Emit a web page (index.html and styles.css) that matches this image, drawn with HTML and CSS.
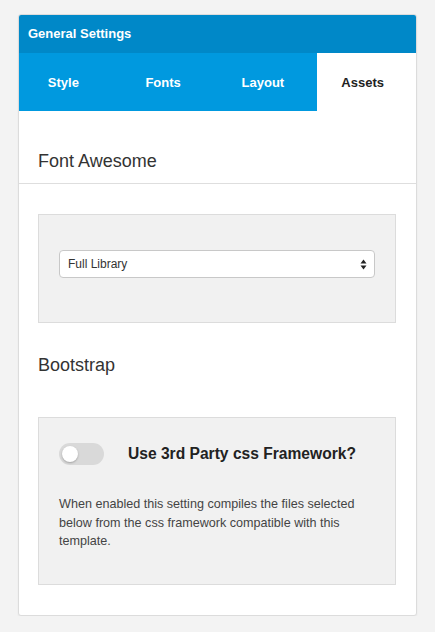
FILE: index.html
```html
<!DOCTYPE html>
<html>
<head>
<meta charset="utf-8">
<link rel="stylesheet" href="styles.css">
</head>
<body>
<div class="card">
  <div class="card-header">General Settings</div>
  <div class="tabs">
    <div class="tab">Style</div>
    <div class="tab">Fonts</div>
    <div class="tab">Layout</div>
    <div class="tab active">Assets</div>
  </div>
  <div class="section-title first">Font Awesome</div>
  <div class="divider"></div>
  <div class="section-body">
    <div class="well well-select">
      <div class="select">
        <span>Full Library</span>
        <svg class="arrows" width="7" height="11" viewBox="0 0 7 11"><path d="M3.5 0.5 L6.5 4.5 H0.5 Z M3.5 10.5 L6.5 6.5 H0.5 Z" fill="#222"/></svg>
      </div>
    </div>
  </div>
  <div class="section-title second">Bootstrap</div>
  <div class="section-body">
    <div class="well well-toggle">
      <div class="toggle-row">
        <div class="toggle"><div class="knob"></div></div>
        <div class="toggle-label">Use 3rd Party css Framework?</div>
      </div>
      <p class="desc">When enabled this setting compiles the files selected below from the css framework compatible with this template.</p>
    </div>
  </div>
</div>
</body>
</html>
```
FILE: styles.css
```css
html, body {
  margin: 0;
  padding: 0;
  background: #f3f3f3;
  font-family: "Liberation Sans", Arial, sans-serif;
}
body {
  padding: 14px 18px 0 18px;
}
.card {
  width: 399px;
  box-sizing: border-box;
  background: #fff;
  border: 1px solid #dcdcdc;
  border-radius: 3px;
  box-shadow: 0 1px 2px rgba(0,0,0,0.06);
  padding-bottom: 30px;
  overflow: hidden;
}
.card-header {
  background: #0088c8;
  color: #fff;
  font-weight: bold;
  font-size: 13px;
  height: 39px;
  line-height: 39px;
  padding-left: 10px;
  margin: -1px -1px 0 -1px;
}
.tabs {
  display: grid;
  grid-template-columns: repeat(4, 1fr);
  height: 58px;
  background: #0099df;
  margin: 0 -1px;
}
.tab {
  display: flex;
  align-items: center;
  justify-content: center;
  padding-right: 9px;
  color: #fff;
  font-weight: bold;
  font-size: 13px;
}
.tab.active {
  background: #fff;
  color: #222;
}
.section-title {
  font-size: 18px;
  color: #333;
  padding-left: 19px;
}
.section-title.first {
  padding-top: 39px;
  padding-bottom: 11px;
  line-height: 22px;
}
.divider {
  height: 1px;
  background: #dedede;
}
.section-body {
  padding: 0 20px 0 19px;
}
.well {
  background: #f1f1f1;
  border: 1px solid #dcdcdc;
}
.well-select {
  margin-top: 30px;
  height: 109px;
  box-sizing: border-box;
  padding: 35px 20px 0 20px;
}
.select {
  height: 28px;
  box-sizing: border-box;
  background: #fff;
  border: 1px solid #c8c8c8;
  border-radius: 4px;
  display: flex;
  align-items: center;
  justify-content: space-between;
  padding: 0 7px 0 8px;
  font-size: 12px;
  color: #333;
}
.arrows {
  display: block;
}
.section-title.second {
  padding-top: 31px;
  line-height: 22px;
  padding-bottom: 41px;
}
.well-toggle {
  height: 168px;
  box-sizing: border-box;
  padding: 25px 20px 0 20px;
}
.toggle-row {
  display: flex;
  align-items: center;
  gap: 24px;
}
.toggle {
  width: 45px;
  height: 22px;
  border-radius: 11px;
  background: #d9d9d9;
  position: relative;
  flex: none;
}
.knob {
  position: absolute;
  left: 3px;
  top: 3px;
  width: 16px;
  height: 16px;
  border-radius: 50%;
  background: #fff;
  box-shadow: 0 1px 2px rgba(0,0,0,0.25);
}
.toggle-label {
  font-weight: bold;
  font-size: 15.6px;
  color: #222;
}
.desc {
  margin: 30px 0 0 0;
  font-size: 12.6px;
  line-height: 18.5px;
  color: #444;
}
```
